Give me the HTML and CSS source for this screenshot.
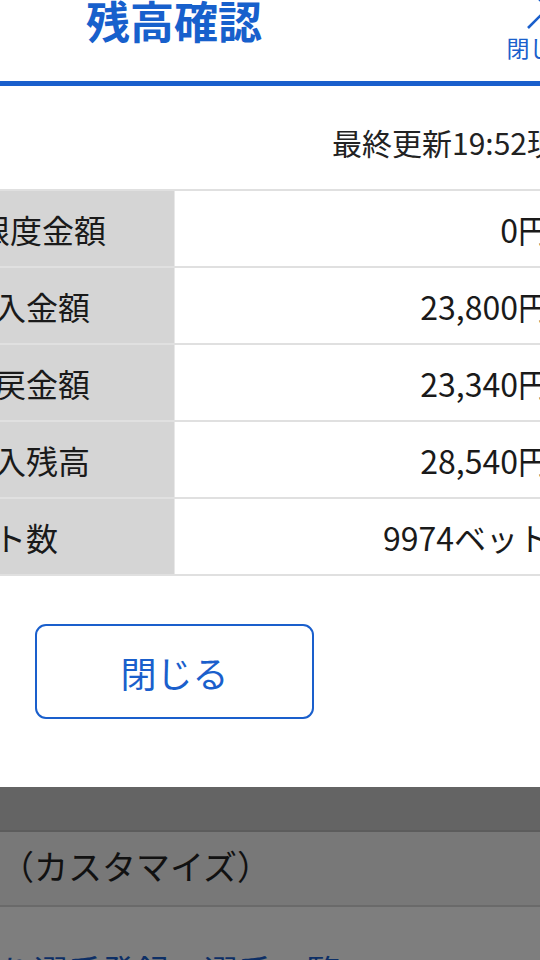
FILE: index.html
```html
<!DOCTYPE html>
<html lang="ja">
<head>
    <meta charset="UTF-8">
    <meta name="viewport" content="width=device-width, initial-scale=1.0">
    <title>残高確認</title>
    <link rel="stylesheet" href="styles.css">
</head>
<body>
    <div id="balance-modal">
        <div class="modal-head">
            <h1 class="modal-title">残高確認</h1>
            <button class="head-close" type="button">
                <svg class="head-close-icon" width="44" height="44" viewBox="0 0 44 44">
                    <path d="M2 2 L42 42 M2 42 L42 2" stroke="#1a5fcc" stroke-width="2.6" fill="none"/>
                </svg>
                <span>閉じる</span>
            </button>
        </div>
        <div class="updated">最終更新19:52現在</div>
        <div class="balance-table">
            <div class="row">
                <div class="row-label">ご利用限度金額</div>
                <div class="row-value">0円</div>
            </div>
            <div class="row">
                <div class="row-label">当日の入金額</div>
                <div class="row-value">23,800円</div>
            </div>
            <div class="row">
                <div class="row-label">当日払戻金額</div>
                <div class="row-value">23,340円</div>
            </div>
            <div class="row">
                <div class="row-label">当日購入残高</div>
                <div class="row-value">28,540円</div>
            </div>
            <div class="row">
                <div class="row-label">ベット数</div>
                <div class="row-value">9974ベット</div>
            </div>
        </div>
        <div class="modal-foot">
            <button class="close-button" type="button">閉じる</button>
        </div>
    </div>
    <!-- 背面のページ（オーバーレイで暗くなっている部分） -->
    <div id="behind">
        <div class="behind-bar"></div>
        <div class="behind-row">表示設定（カスタマイズ）</div>
        <div class="behind-row link">お気に入り選手登録・選手一覧</div>
    </div>
</body>
</html>
```

FILE: styles.css
```css
body {
    margin: 0;
    width: 540px;
    height: 960px;
    overflow: hidden;
    font-family: "Noto Sans CJK JP", "Noto Sans", sans-serif;
    background: #7e7e7e;
}
/* モーダル本体（画面より広く、左右がはみ出している） */
#balance-modal {
    width: 786px;
    margin-left: -186px;
    background: #fff;
}
.modal-head {
    display: flex;
    align-items: flex-start;
    height: 81px;
    padding-left: 272px;
    border-bottom: 5px solid #1a5fcc;
}
.modal-title {
    margin: -2px 0 0;
    font-size: 44px;
    line-height: 1;
    font-weight: bold;
    color: #1760cc;
}
.head-close {
    margin-left: auto;
    margin-right: 23px;
    width: 72px;
    padding: 0;
    border: none;
    background: none;
    display: flex;
    flex-direction: column;
    align-items: center;
    font-family: inherit;
    font-size: 23px;
    line-height: 1;
    color: #1a5fcc;
}
.head-close-icon {
    margin-top: -14px;
    margin-left: 14px;
}
.head-close span {
    margin-top: 6px;
    white-space: nowrap;
}
.updated {
    margin-top: 41px;
    padding-right: 13px;
    text-align: right;
    font-size: 30px;
    line-height: 1;
    color: #222;
}
/* 残高テーブル */
.balance-table {
    margin: 32px 34px 0 0;
    border-top: 2px solid #e0e0e0;
}
.row {
    display: flex;
    height: 75px;
    border-bottom: 2px solid #e0e0e0;
    font-size: 32px;
    color: #1a1a1a;
}
.row-label {
    width: 360px;
    background: #d5d5d5;
    display: flex;
    align-items: center;
    justify-content: center;
    white-space: nowrap;
}
.row-value {
    flex: 1;
    border-left: 1px solid #e8e8e8;
    display: flex;
    align-items: center;
    justify-content: flex-end;
    padding-right: 16px;
    white-space: nowrap;
}
.modal-foot {
    padding: 48px 0 68px 221px;
}
.close-button {
    display: block;
    width: 279px;
    height: 95px;
    border: 2.5px solid #1a5fcc;
    border-radius: 11px;
    background: #fff;
    color: #1a5fcc;
    font-family: inherit;
    font-size: 36px;
}
/* 背面ページ */
.behind-bar {
    height: 43px;
    background: #646464;
    border-bottom: 2px solid #5c5c5c;
}
.behind-row {
    height: 75px;
    margin-left: -136px;
    padding-top: 15px;
    box-sizing: border-box;
    background: #787878;
    border-bottom: 2px solid #6a6a6a;
    font-size: 34px;
    line-height: 1.1;
    color: #111;
    white-space: nowrap;
}
.behind-row.link {
    padding-top: 45px;
    background: #7e7e7e;
    border-bottom: none;
    color: #0d2f66;
}
```
